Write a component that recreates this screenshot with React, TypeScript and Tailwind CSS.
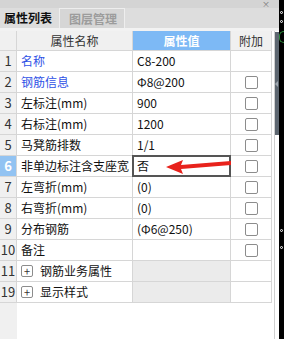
import type { ReactNode } from "react";

const font = { fontFamily: '"Noto Sans CJK SC", "Noto Sans", sans-serif' };

type Row = {
  n: string;
  name: string;
  value: string;
  blue?: boolean;
  check?: boolean;
  active?: boolean;
};

const rows: Row[] = [
  { n: "1", name: "名称", value: "C8-200", blue: true },
  { n: "2", name: "钢筋信息", value: "Φ8@200", blue: true, check: true },
  { n: "3", name: "左标注(mm)", value: "900", check: true },
  { n: "4", name: "右标注(mm)", value: "1200", check: true },
  { n: "5", name: "马凳筋排数", value: "1/1", check: true },
  { n: "6", name: "非单边标注含支座宽", value: "否", check: true, active: true },
  { n: "7", name: "左弯折(mm)", value: "(0)", check: true },
  { n: "8", name: "右弯折(mm)", value: "(0)", check: true },
  { n: "9", name: "分布钢筋", value: "(Φ6@250)", check: true },
  { n: "10", name: "备注", value: "", check: true },
];

const groups = [
  { n: "11", name: "钢筋业务属性" },
  { n: "19", name: "显示样式" },
];

function Cell({ children, className = "" }: { children?: ReactNode; className?: string }) {
  return (
    <div className={`relative flex h-[21px] items-center border-r border-b border-[#d6d6d6] ${className}`}>
      {children}
    </div>
  );
}

function Checkbox() {
  return <span className="h-[13px] w-[13px] rounded-[2px] border border-[#8c8c8c] bg-white" />;
}

function Arrow() {
  return (
    <svg
      className="absolute left-[33px] top-[3px]"
      width="66"
      height="16"
      viewBox="0 0 66 16"
    >
      <polygon points="0,8 17,1 15,6 65,2 65,6 15,10 17,15" fill="#e8221c" />
    </svg>
  );
}

export default function App() {
  return (
    <div className="flex h-[339px] w-[284px] overflow-hidden bg-white text-[12px]" style={font}>
      <div className="flex w-[279px] flex-col">
        <div className="flex h-[8px] items-center justify-end bg-[#d4d4d4] pr-[9px]">
          <span className="text-[8px] leading-[8px] text-[#777]">×</span>
        </div>
        <div className="flex h-[20px] bg-[#dddddd]">
          <div className="flex w-[59px] items-center pl-[4px] font-bold text-[#111]">属性列表</div>
          <div className="flex w-[66px] items-center border border-b-0 border-[#eeeeee] bg-[#d6d6d6] pl-[9px] font-bold text-[#9c9c9c]">
            图层管理
          </div>
        </div>
        <div className="h-[3px] bg-[#f2f2f2]" />
        <div className="flex flex-1">
          <div className="flex w-[274px] flex-col">
            <div className="grid grid-cols-[17px_116px_98px_41px]">
              <div className="h-[20px] border-r border-b border-[#d6d6d6] bg-[#f0f0f0]" />
              <div className="flex h-[20px] items-center justify-center border-r border-b border-[#d6d6d6] bg-[#f0f0f0] text-[#333]">
                属性名称
              </div>
              <div className="flex h-[20px] items-center justify-center border-r border-b border-[#d6d6d6] bg-[#7db9f5] font-semibold text-white">
                属性值
              </div>
              <div className="flex h-[20px] items-center justify-center border-r border-b border-[#d6d6d6] bg-[#f0f0f0] text-[#333]">
                附加
              </div>

              {rows.map((r) => (
                <Row key={r.n} r={r} />
              ))}

              {groups.map((g) => (
                <div key={g.n} className="contents">
                  <Cell className="justify-center bg-[#f0f0f0] text-[13px] text-[#333]">{g.n}</Cell>
                  <Cell className="pl-[4px] text-[#111]">
                    <span className="mr-[7px] flex h-[12px] w-[12px] items-center justify-center rounded-[2px] border border-[#8c8c8c] text-[11px] leading-none text-[#333]">
                      +
                    </span>
                    {g.name}
                  </Cell>
                  <Cell className="bg-[#ebebeb]" />
                  <Cell />
                </div>
              ))}
            </div>
            <div className="flex flex-1">
              <div className="w-[17px] bg-[#f0f0f0]" />
            </div>
          </div>
          <div className="relative w-[5px] border-l border-[#cfcfcf] bg-white">
            <div className="mt-[1px] h-[103px] bg-[#5d6670]" />
            <span className="absolute left-[0px] top-[50px] h-0 w-0 border-y-[3px] border-r-[3px] border-y-transparent border-r-[#a0a8b0]" />
          </div>
        </div>
      </div>
      <div className="relative w-[5px] bg-black">
        <span className="absolute left-[1px] top-[11px] h-[3px] w-[3px] rounded-full border border-white" />
        <span className="absolute left-[1px] top-[20px] h-[3px] w-[3px] rounded-full border border-white" />
        <span className="absolute left-[0px] top-[31px] h-[12px] w-[5px] rounded-l-full border border-r-0 border-[#2a8a3a]" />
        <span className="absolute left-[1px] top-[229px] h-[3px] w-[3px] rounded-full border border-white" />
        <span className="absolute left-[1px] top-[246px] h-[3px] w-[3px] rounded-full border border-white" />
      </div>
    </div>
  );
}

function Row({ r }: { r: Row }) {
  return (
    <>
      <Cell
        className={`justify-center text-[13px] ${
          r.active ? "bg-[#92c3f2] font-bold text-white" : "bg-[#f0f0f0] text-[#333]"
        }`}
      >
        {r.n}
      </Cell>
      <Cell className={`pl-[4px] whitespace-nowrap ${r.blue ? "text-[#2f52e6]" : "text-[#111]"}`}>{r.name}</Cell>
      <Cell className="pl-[4px] text-[#111]">
        {r.value}
        {r.active && (
          <>
            <span className="absolute -left-px -top-px bottom-[-1px] right-[-1px] border-2 border-[#555]" />
            <Arrow />
          </>
        )}
      </Cell>
      <Cell className="justify-center">{r.check && <Checkbox />}</Cell>
    </>
  );
}
